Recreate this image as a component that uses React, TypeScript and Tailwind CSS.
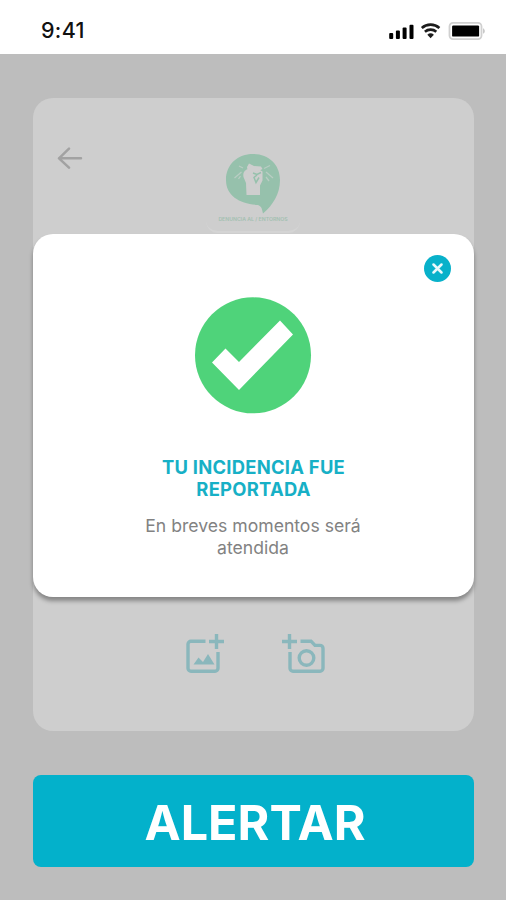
function StatusBar() {
    return (
        <header className="flex h-[54px] items-start justify-between bg-white pl-[41px] pr-5">
            <span className="mt-[17px] text-[21.5px] leading-[26px] font-medium tracking-[0.3px] text-[#111]">9:41</span>
            <div className="mt-[22px] flex items-center">
                {/* Signal */}
                <svg width="26" height="18" viewBox="0 0 26 18" fill="#000">
                    <rect x="0.2" y="11" width="4" height="6" rx="1" />
                    <rect x="6.9" y="8.5" width="4" height="8.5" rx="1" />
                    <rect x="13.6" y="5.5" width="4" height="11.5" rx="1" />
                    <rect x="20.5" y="2.8" width="4" height="14.2" rx="1" />
                </svg>
                {/* Wifi */}
                <svg className="ml-[5px]" width="22" height="18" viewBox="0 0 22 18" fill="none" stroke="#1c1c1c" strokeWidth="2.6">
                    <path d="M1.8 6a13.2 13.2 0 0 1 17.6 0" />
                    <path d="M4.9 9.8a8.6 8.6 0 0 1 11.4 0" />
                    <path d="M7.3 12.7a5 5 0 0 1 6.6 0L10.6 16.2z" fill="#1c1c1c" stroke="none" />
                </svg>
                {/* Battery */}
                <svg className="ml-[6px]" width="38" height="18" viewBox="0 0 38 18">
                    <rect x="1.5" y="0.9" width="32" height="16.2" rx="3.5" fill="none" stroke="#d0d0d0" strokeWidth="1.8" />
                    <rect x="4.1" y="3.4" width="27" height="11.2" rx="1.2" fill="#000" />
                    <path d="M35 6.2c2.4 1 2.4 4.6 0 5.6z" fill="#c8c8c8" />
                </svg>
            </div>
        </header>
    );
}

function BackArrow() {
    return (
        <svg width="26" height="22" viewBox="0 0 26 22" fill="none" stroke="#a2a2a2" strokeWidth="2.5" strokeLinecap="round" strokeLinejoin="round">
            <path d="M24 11.3H2M12 1.6L2 11.3l10 9.4" />
        </svg>
    );
}

function Logo() {
    return (
        <div className="flex h-[80px] w-[94px] flex-col items-center rounded-xl border-b-2 border-[#d4d4d4]">
            <svg width="56" height="62" viewBox="0 0 56 62">
                <path d="M28 1C43 1 55 11 55 27c0 14-7 25-17 33.5-1-4-1-7-5-8.5C15 51 1 43 1 27 1 11 13 1 28 1z" fill="#96c1ac" />
                <g fill="#cecece">
                    <path d="M21.5 42l-.5-12-2.5-6c-1-5 2-7.5 5-8l9-.5 5 3v9l-2.500 5V42z" />
                    <path d="M22 14l2-3.5 5 2.5 7 .5 1.5 2.5-5 2.5-10-1z" />
                </g>
                <path d="M18 15l-4-2M16.5 19l-7 6M15.5 23l-2 3M39 15.5l6-3M41 19l7 6M41 24l3 4" fill="none" stroke="#b9cdc3" strokeWidth="1.3" />
                <path d="M28 20l4 1.5 4-2M32 22l-3 2.5 2 5 3-5" fill="none" stroke="#96c1ac" strokeWidth="1.5" />
            </svg>
            <span className="text-[5.2px] leading-[8px] font-semibold whitespace-nowrap text-[#a3c0b1]">DENUNCIA AL / ENTORNOS</span>
        </div>
    );
}

function AddImageIcon() {
    return (
        <svg width="40" height="42" viewBox="0 0 40 42" fill="none" stroke="#8ab7bc" strokeWidth="3.4">
            <path d="M20.5 8.2H6a3 3 0 0 0-3 3v24a3 3 0 0 0 3 3h24a3 3 0 0 0 3-3V19" />
            <path d="M31.5 1v15M24 8.5h15" />
            <path d="M8.5 31.5l5-7 4.5 4.5 5-8 6.5 10.5z" fill="#8ab7bc" stroke="none" />
        </svg>
    );
}

function AddCameraIcon() {
    return (
        <svg width="44" height="42" viewBox="0 0 44 42" fill="none" stroke="#8ab7bc" strokeWidth="3.4">
            <path d="M18.5 8.2H29l4 4.2h5a3 3 0 0 1 3 3v19.8a3 3 0 0 1-3 3H11a3 3 0 0 1-3-3V19" />
            <path d="M7.5 1v15M0 8.5h15" />
            <circle cx="24.5" cy="25" r="7.3" />
        </svg>
    );
}

function Modal() {
    return (
        <div className="absolute top-[234px] left-[33px] flex h-[363px] w-[441px] flex-col items-center rounded-[20px] bg-white shadow-[0_4px_4px_rgba(0,0,0,0.35)]">
            <button className="mt-[21px] mr-[23px] flex size-[27px] items-center justify-center self-end rounded-full bg-[#08b1ca]">
                <svg width="11" height="11" viewBox="0 0 11 11" fill="none" stroke="#e9f8fb" strokeWidth="2.5" strokeLinecap="round">
                    <path d="M1.5 1.5l8 8M9.5 1.5l-8 8" />
                </svg>
            </button>
            <svg className="mt-[15px] mr-px" width="117" height="117" viewBox="0 0 117 117">
                <circle cx="58" cy="58.3" r="58" fill="#4fd37a" />
                <path d="M17 65.5L30.500 51.5 44 65 85 23.500 98 37.500 44 93z" fill="#fff" />
            </svg>
            <h2 className="mt-[42px] text-center text-[18.4px] leading-[22px] font-bold tracking-[0.25px] text-[#17b0c6]">
                TU INCIDENCIA FUE<br />REPORTADA
            </h2>
            <p className="mt-[15px] mr-px text-center text-[17.6px] leading-[22px] text-[#828282]">
                En breves momentos será<br />atendida
            </p>
        </div>
    );
}

export default function App() {
    return (
        <div className="relative flex h-[900px] w-[506px] flex-col overflow-hidden bg-[#bdbdbd] font-['Inter',sans-serif]">
            <StatusBar />
            <main className="flex flex-col pt-[44px] pr-[32px] pl-[33px]">
                <section className="flex h-[633px] flex-col items-center rounded-[20px] bg-[#cecece]">
                    <button className="mt-[49px] ml-[24px] self-start">
                        <BackArrow />
                    </button>
                    <div className="-mt-[16px] mr-px">
                        <Logo />
                    </div>
                    <div className="mt-[400px] ml-[3px] flex gap-[57px]">
                        <AddImageIcon />
                        <AddCameraIcon />
                    </div>
                </section>
                <button className="mt-[44px] h-[92px] rounded-[8px] bg-[#03b1cb] pt-[4px] pl-[3px] text-[48.5px] leading-none font-bold text-white">
                    ALERTAR
                </button>
            </main>
            <Modal />
        </div>
    );
}
